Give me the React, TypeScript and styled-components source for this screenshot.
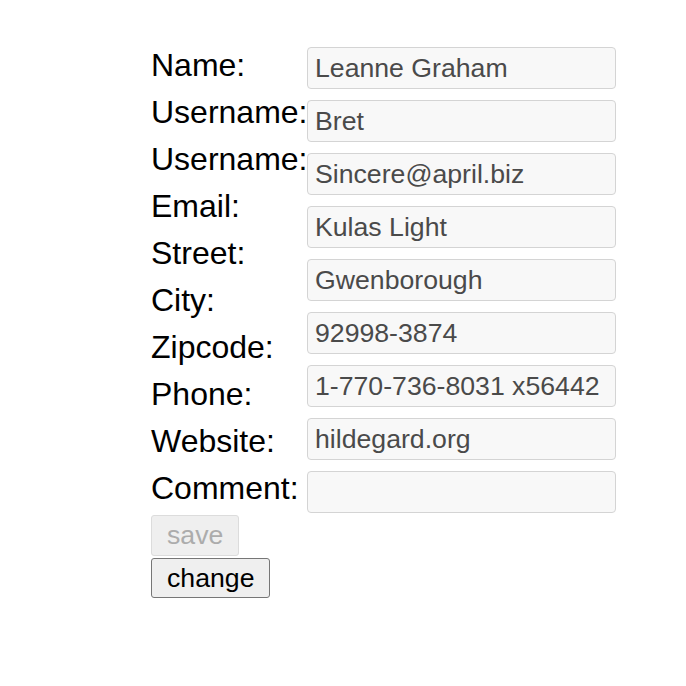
import React from "react";
import styled, { createGlobalStyle } from "styled-components";

const Global = createGlobalStyle`
  html, body { margin: 0; padding: 0; background: #fff; }
  body { font-family: "Liberation Sans", Arial, sans-serif; }
`;

const Page = styled.div`
  padding: 41px 0 0 151px;
`;

const Form = styled.div`
  display: flex;
  flex-direction: row;
  align-items: flex-start;
`;

const Labels = styled.div`
  display: flex;
  flex-direction: column;
  width: 156px;
  padding-top: 1px;
`;

const Label = styled.div`
  font-size: 32px;
  line-height: 47px;
  height: 47px;
  color: #000;
  white-space: nowrap;
`;

const Inputs = styled.div`
  display: flex;
  flex-direction: column;
  gap: 11px;
  padding-top: 6px;
`;

const Field = styled.input`
  box-sizing: border-box;
  width: 309px;
  height: 42px;
  margin: 0;
  padding: 0 7px;
  font-family: "Liberation Sans", Arial, sans-serif;
  font-size: 26.67px;
  color: #4a4a4a;
  background: #f8f8f8;
  border: 1.5px solid #d4d4d4;
  border-radius: 4px;
  outline: none;
`;

const Buttons = styled.div`
  display: flex;
  flex-direction: column;
  align-items: flex-start;
  gap: 2px;
  margin-top: 2px;
`;

const Button = styled.button<{ $height: number }>`
  box-sizing: border-box;
  height: ${(p) => p.$height}px;
  padding: 0 15px;
  margin: 0;
  font-family: "Liberation Sans", Arial, sans-serif;
  font-size: 26.67px;
  line-height: 1;
  color: #000;
  background: #efefef;
  border: 1.5px solid #767676;
  border-radius: 3px;
  &:disabled {
    color: #acacac;
    border-color: #dcdcdc;
    background: #efefef;
  }
`;

const labels = [
  "Name:",
  "Username:",
  "Username:",
  "Email:",
  "Street:",
  "City:",
  "Zipcode:",
  "Phone:",
  "Website:",
  "Comment:",
];

const values = [
  "Leanne Graham",
  "Bret",
  "Sincere@april.biz",
  "Kulas Light",
  "Gwenborough",
  "92998-3874",
  "1-770-736-8031 x56442",
  "hildegard.org",
  "",
];

export default function App() {
  return (
    <Page>
      <Global />
      <Form>
        <Labels>
          {labels.map((l, i) => (
            <Label key={i}>{l}</Label>
          ))}
        </Labels>
        <Inputs>
          {values.map((v, i) => (
            <Field key={i} defaultValue={v} />
          ))}
        </Inputs>
      </Form>
      <Buttons>
        <Button $height={41} disabled>
          save
        </Button>
        <Button $height={40}>change</Button>
      </Buttons>
    </Page>
  );
}
